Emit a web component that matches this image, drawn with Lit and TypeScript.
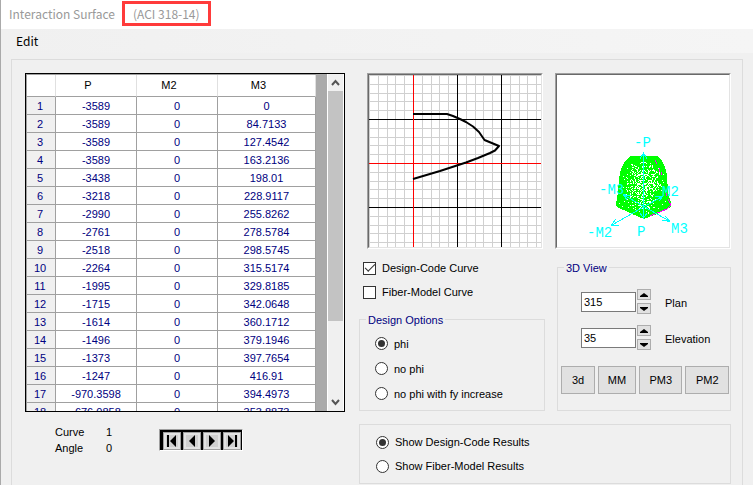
import { LitElement, html, css, svg } from "lit";
import { customElement, state } from "lit/decorators.js";

const ROWS: string[][] = [
  ["-3589", "0", "0"],
  ["-3589", "0", "84.7133"],
  ["-3589", "0", "127.4542"],
  ["-3589", "0", "163.2136"],
  ["-3438", "0", "198.01"],
  ["-3218", "0", "228.9117"],
  ["-2990", "0", "255.8262"],
  ["-2761", "0", "278.5784"],
  ["-2518", "0", "298.5745"],
  ["-2264", "0", "315.5174"],
  ["-1995", "0", "329.8185"],
  ["-1715", "0", "342.0648"],
  ["-1614", "0", "360.1712"],
  ["-1496", "0", "379.1946"],
  ["-1373", "0", "397.7654"],
  ["-1247", "0", "416.91"],
  ["-970.3598", "0", "394.4973"],
  ["-676.0858", "0", "353.8873"],
];

const frame = css`
  :host {
    display: block;
    box-sizing: border-box;
    border: 1px solid;
    border-color: #a0a0a0 #fff #fff #a0a0a0;
  }
  .plot {
    display: block;
    box-sizing: border-box;
    width: 100%;
    background: #fff;
    border: 1px solid;
    border-color: #696969 #e3e3e3 #e3e3e3 #696969;
  }
`;

@customElement("curve-plot")
class CurvePlot extends LitElement {
  static styles = [
    frame,
    css`
      .minor { stroke: #d0d0d0; }
      .major { stroke: #000; }
      .axis { stroke: #f00; }
      .curve { fill: none; stroke: #000; stroke-width: 2; stroke-linejoin: round; }
      .grid { shape-rendering: crispEdges; }
    `,
  ];

  render() {
    const minor: number[] = [];
    for (const base of [0, 44, 88, 132]) {
      for (const step of [0, 9, 18, 26, 35]) minor.push(base + step);
    }
    const v = (x: number, c: string) =>
      svg`<line class=${c} x1=${x + 0.5} x2=${x + 0.5} y1="0" y2="172"></line>`;
    const h = (y: number, c: string) =>
      svg`<line class=${c} y1=${y + 0.5} y2=${y + 0.5} x1="0" x2="172"></line>`;
    return html`<svg class="plot" viewBox="0 0 172 172" role="img" aria-label="Interaction curve">
      <g class="grid">
        ${minor.map((n) => svg`${v(n, "minor")}${h(n, "minor")}`)}
        ${v(88, "major")}${v(132, "major")}${h(44, "major")}${h(132, "major")}
        ${v(44, "axis")}${h(88, "axis")}
      </g>
      <path class="curve" d="M44 39H78L84 41L92 44.500L97 47L104 51.500L110 57L115.500 65L130 71L126 75.500L121 78L109 83L97 87.500L71 96L44 104"></path>
    </svg>`;
  }
}

@customElement("surface-plot")
class SurfacePlot extends LitElement {
  static styles = [
    frame,
    css`
      .mesh { fill: #0f0; shape-rendering: crispEdges; }
      .gap { fill: #fff; shape-rendering: crispEdges; }
      .section { stroke: #f0f; fill: none; shape-rendering: crispEdges; }
      .axes { stroke: #0ff; fill: none; shape-rendering: crispEdges; }
      .label { fill: #0ff; font: 14px "Liberation Mono", monospace; }
    `,
  ];

  /* Openings of the wire mesh: frequent in the middle, closing towards the rim. */
  private gaps() {
    const cells = [];
    for (let y = 84; y < 142; y++) {
      for (let x = 62; x < 112; x++) {
        const dx = (x - 86) / 21;
        const dy = (y - 104) / (y < 104 ? 19 : 36);
        const r = dx * dx + dy * dy;
        if (r > 1) continue;
        const noise = Math.abs(Math.sin(x * 12.9898 + y * 78.233) * 43758.5453) % 1;
        if (noise < 0.42 * (1 - r) + 0.02) {
          cells.push(svg`<rect class="gap" x=${x} y=${y} width="1" height="1"></rect>`);
        }
      }
    }
    return cells;
  }

  render() {
    return html`<svg class="plot" viewBox="0 0 172 172" role="img" aria-label="Interaction surface">
      <path class="mesh" d="M74 81H100L104 84L108 92L110 100L111 117L114 128V132L100 139L87 144L73 138L60 132L59 129L61 117L62 103L64 94L68 86Z"></path>
      ${this.gaps()}
      ${[[62, 128], [65, 131], [67, 126], [105, 129], [108, 126], [101, 133], [71, 132]].map(
        ([x, y]) => svg`<rect class="gap" x=${x} y=${y} width="1" height="1"></rect>`,
      )}
      <path class="section" d="M98 85l2 4M102 93l1 4M104 97v3M109 118v3M111 124l2 4v3L110 134L93 141"></path>
      <path class="axes" d="M86.500 78V143M83 84L86.500 78L90 84M83 138L86.500 143L90 138M54 150.500L106 121M54 150.500L59 144M54 150.500L62 150M106 121L98 121M106 121L102 126M66 119.500L113 146.500M66 119.500L70 125M66 119.500L74 121M113 146.500L108 141M113 146.500L105 145"></path>
      <text class="label" x="77" y="72">-P</text>
      <text class="label" x="42" y="119">-M3</text>
      <text class="label" x="105" y="121">M2</text>
      <text class="label" x="80" y="161">P</text>
      <text class="label" x="30" y="162">-M2</text>
      <text class="label" x="114" y="158">M3</text>
    </svg>`;
  }
}

@customElement("app-root")
class AppRoot extends LitElement {
  static styles = css`
    :host {
      display: flex;
      flex-direction: column;
      box-sizing: border-box;
      min-height: 100vh;
      border-left: 1px solid #aaa;
      background: #f0f0f0;
      color: #000;
      font: 11px/14px "Liberation Sans", Arial, sans-serif;
    }
    * { box-sizing: border-box; }
    button, input { font: inherit; color: inherit; margin: 0; padding: 0; }
    .titlebar {
      display: flex;
      gap: 7px;
      height: 29px;
      padding: 1px 8px;
      background: #fff;
      color: #999;
      font: 12px/25px "Noto Sans CJK SC", "Noto Sans", sans-serif;
    }
    .code {
      height: 25px;
      padding: 0 8px;
      border: 3px solid #ff3b3b;
      line-height: 19px;
    }
    .menubar {
      height: 24px;
      padding-left: 15px;
      background: linear-gradient(90deg, #f0f0f0, #f5f5f5);
    }
    .menu {
      border: 0;
      background: none;
      font: 12px/24px "Noto Sans CJK SC", "Noto Sans", sans-serif;
    }
    .panel {
      flex: 1;
      display: grid;
      grid-template-columns: 322fr 188fr 176fr;
      grid-template-rows: auto 1fr;
      gap: 12px 10px;
      margin: 6px 10px 0;
      padding: 13px 11px 0 13px;
      border: 1px solid #dcdcdc;
      border-bottom: 0;
    }
    .list {
      display: flex;
      height: 339px;
      margin-right: 2px;
      border: 1px solid #000;
      background: #aaa;
      overflow: hidden;
    }
    .grid {
      flex: 1;
      min-width: 0;
      padding: 1px 0 0 1px;
      background: #a0a0a0;
      overflow: hidden;
    }
    table {
      width: 100%;
      table-layout: fixed;
      border-collapse: separate;
      border-spacing: 0;
      background: #fff;
      text-align: center;
    }
    th, td {
      height: 18px;
      padding: 2px 0 0;
      border-right: 1px solid #a0a0a0;
      border-bottom: 1px solid #a0a0a0;
      font-weight: 400;
      line-height: 15px;
    }
    td { color: #000080; }
    thead th {
      height: 22px;
      padding: 0 16px 0 0;
      border-right-color: #e0e0e0;
    }
    tbody th {
      padding-right: 2px;
      background: #f0f0f0;
      color: #000080;
    }
    .col-index { width: 29px; }
    .col-narrow { width: 81px; }
    .scroll {
      display: flex;
      flex-direction: column;
      width: 17px;
      margin-left: 11px;
      border: 1px solid #fff;
      border-width: 0 1px;
      background: #f0f0f0;
    }
    .arrow {
      display: grid;
      place-items: center;
      height: 17px;
      border: 0;
      background: #f0f0f0;
    }
    .arrow path { fill: none; stroke: #555; stroke-width: 2; }
    .track { flex: 1; }
    .thumb { height: 76%; background: #c3c3c3; }
    .middle { padding-left: 2px; }
    .middle curve-plot { margin: 0 2px 0 8px; }
    .checks { margin: 7px 0; padding-left: 4px; }
    .option {
      display: flex;
      align-items: center;
      gap: 6px;
      height: 24px;
    }
    .tick, .radio {
      appearance: none;
      display: grid;
      place-items: center;
      flex: none;
      width: 13px;
      height: 13px;
      border: 1px solid #333;
      background: #fff;
    }
    .radio { border-radius: 50%; }
    .radio:checked::before {
      content: "";
      width: 7px;
      height: 7px;
      border-radius: 50%;
      background: #333;
    }
    .tick:checked::before {
      content: "";
      width: 9px;
      height: 4px;
      margin-top: -3px;
      border: solid #333;
      border-width: 0 0 1px 1px;
      transform: rotate(-45deg);
    }
    fieldset {
      min-width: 0;
      margin: 0;
      padding: 0;
      border: 1px solid #dcdcdc;
    }
    legend {
      padding: 2px 2px 0;
      color: #000080;
    }
    .design { padding: 4px 6px; }
    .design .option { height: 25px; padding-left: 9px; }
    .view { margin: 10px 0 0 2px; padding: 14px 1px 16px 3px; }
    .view legend { margin-left: 3px; }
    .spin {
      display: flex;
      align-items: center;
      gap: 1px;
      height: 25px;
      margin: 0 0 11px 20px;
    }
    .spin input {
      width: 55px;
      height: 20px;
      padding-left: 2px;
      border: 1px solid #7a7a7a;
      background: #fff;
    }
    .steps { display: grid; gap: 3px; }
    .step {
      display: grid;
      place-items: center;
      width: 14px;
      height: 11px;
      border: 1px solid #adadad;
      background: #e1e1e1;
    }
    .spin label { padding: 2px 0 0 13px; }
    .presets { display: flex; gap: 3px; margin-top: 16px; }
    .preset {
      flex: 44 1 0;
      height: 28px;
      border: 1px solid #adadad;
      background: #e1e1e1;
    }
    .preset.small { flex-grow: 34; }
    .preset.medium { flex-grow: 38; }
    .footer { display: flex; align-items: flex-start; }
    .info {
      display: grid;
      grid-template-columns: 51px 53px;
      grid-auto-rows: 16px;
      margin: 0 0 0 30px;
      line-height: 16px;
    }
    .info dt, .info dd { margin: 0; }
    .nav {
      display: flex;
      gap: 2px;
      margin-top: 5px;
      padding: 2px 1px 0 3px;
      border: 1px solid;
      border-color: #a0a0a0 #fff #fff #a0a0a0;
      background: #000;
    }
    .go {
      display: grid;
      place-items: center;
      width: 18px;
      height: 18px;
      border: 1px solid #a0a0a0;
      background: #d0d0d0;
      box-shadow: inset 0 0 0 2px #e3e3e3;
    }
    .results {
      grid-column: span 2;
      align-self: start;
      margin-left: 2px;
      padding: 5px 0 5px 16px;
    }
    svg { display: block; }
  `;

  @state() private showDesign = true;
  @state() private showFiber = false;

  private option(name: string, text: string, checked = false) {
    return html`<label class="option">
      <input class="radio" type="radio" name=${name} .checked=${checked} />${text}
    </label>`;
  }

  private spinner(id: string, text: string, value: string) {
    return html`<div class="spin">
      <input id=${id} type="text" .value=${value} />
      <span class="steps">
        <button class="step" aria-label="Increase ${text}">
          <svg width="8" height="4"><path d="M4 0L8 3V4H0V3Z"></path></svg>
        </button>
        <button class="step" aria-label="Decrease ${text}">
          <svg width="8" height="4"><path d="M4 4L8 1V0H0V1Z"></path></svg>
        </button>
      </span>
      <label for=${id}>${text}</label>
    </div>`;
  }

  private go(name: string, d: string) {
    return html`<button class="go" aria-label=${name}>
      <svg width="12" height="12"><path d=${d}></path></svg>
    </button>`;
  }

  render() {
    return html`
      <header class="titlebar">
        <span>Interaction Surface</span><span class="code">(ACI 318-14)</span>
      </header>
      <nav class="menubar"><button class="menu">Edit</button></nav>
      <main class="panel">
        <div class="list">
          <div class="grid">
            <table>
              <colgroup>
                <col class="col-index" /><col class="col-narrow" /><col class="col-narrow" /><col />
              </colgroup>
              <thead>
                <tr><th></th><th scope="col">P</th><th scope="col">M2</th><th scope="col">M3</th></tr>
              </thead>
              <tbody>
                ${ROWS.map(
                  (row, i) => html`<tr>
                    <th scope="row">${i + 1}</th>
                    ${row.map((cell) => html`<td>${cell}</td>`)}
                  </tr>`,
                )}
              </tbody>
            </table>
          </div>
          <div class="scroll">
            <button class="arrow" aria-label="Scroll up">
              <svg width="9" height="7"><path d="M1 6L4.500 2L8 6"></path></svg>
            </button>
            <div class="track"><div class="thumb"></div></div>
            <button class="arrow" aria-label="Scroll down">
              <svg width="9" height="7"><path d="M1 1L4.500 5L8 1"></path></svg>
            </button>
          </div>
        </div>

        <section class="middle">
          <curve-plot></curve-plot>
          <div class="checks">
            <label class="option">
              <input class="tick" type="checkbox" .checked=${this.showDesign}
                @change=${() => (this.showDesign = !this.showDesign)} />Design-Code Curve
            </label>
            <label class="option">
              <input class="tick" type="checkbox" .checked=${this.showFiber}
                @change=${() => (this.showFiber = !this.showFiber)} />Fiber-Model Curve
            </label>
          </div>
          <fieldset class="design">
            <legend>Design Options</legend>
            ${this.option("design", "phi", true)}
            ${this.option("design", "no phi")}
            ${this.option("design", "no phi with fy increase")}
          </fieldset>
        </section>

        <section>
          <surface-plot></surface-plot>
          <fieldset class="view">
            <legend>3D View</legend>
            ${this.spinner("plan", "Plan", "315")}
            ${this.spinner("elevation", "Elevation", "35")}
            <div class="presets">
              <button class="preset small">3d</button>
              <button class="preset medium">MM</button>
              <button class="preset">PM3</button>
              <button class="preset">PM2</button>
            </div>
          </fieldset>
        </section>

        <div class="footer">
          <dl class="info">
            <dt>Curve</dt><dd>1</dd>
            <dt>Angle</dt><dd>0</dd>
          </dl>
          <div class="nav">
            ${this.go("First", "M1 0H3V12H1ZM10 0V12L4 6Z")}
            ${this.go("Previous", "M9 0V12L3 6Z")}
            ${this.go("Next", "M3 0V12L9 6Z")}
            ${this.go("Last", "M9 0H11V12H9ZM2 0V12L8 6Z")}
          </div>
        </div>
        <fieldset class="results" aria-label="Results">
          ${this.option("results", "Show Design-Code Results", true)}
          ${this.option("results", "Show Fiber-Model Results")}
        </fieldset>
      </main>
    `;
  }
}
